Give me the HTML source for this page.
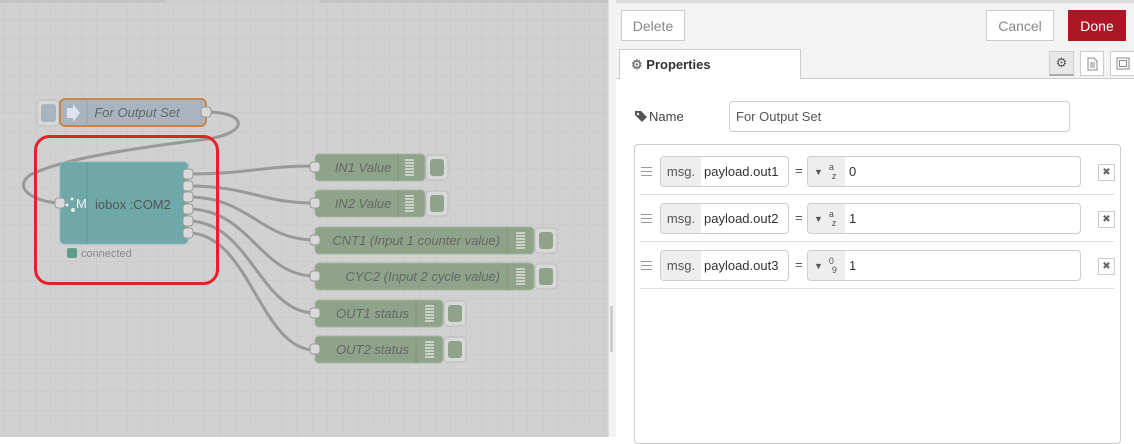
<!DOCTYPE html>
<html><head><meta charset="utf-8"><style>
*{box-sizing:border-box;margin:0;padding:0}
body{width:1134px;height:437px;overflow:hidden;position:relative;font-family:"Liberation Sans",Arial,sans-serif;background:#fff}
.a{position:absolute}
.btn{position:absolute;background:#fff;border:1px solid #ccc;color:#888;font-size:14px;display:flex;align-items:center;justify-content:center}
.inp{position:absolute;border:1px solid #ccc;border-radius:4px;background:#fff;font-size:13px;color:#555;display:flex;align-items:center}
.hd{position:absolute;width:11px;height:9px;border-top:1.5px solid #999;border-bottom:1.5px solid #999}
.hd div{margin-top:2.5px;height:1.5px;background:#999}
</style></head><body>
<svg class="a" style="left:0;top:0" width="608" height="437" font-family="Liberation Sans">
<defs><pattern id="g" x="4" y="1" width="15.4" height="18.6" patternUnits="userSpaceOnUse"><rect width="15.4" height="18.6" fill="#d1d1d1"/><path d="M0 0V18.6M0 0H15.4" stroke="#c6c6c6" stroke-width="1"/></pattern></defs>
<rect width="608" height="437" fill="url(#g)"/>
<rect x="0" y="0" width="165" height="3" fill="#c4c4c4"/><rect x="320" y="0" width="288" height="3" fill="#c4c4c4"/>
<g fill="none" stroke="#999" stroke-width="3">
<path d="M206 112 C250 112 250 135 200 140 C120 150 60 160 30 175 C10 190 40 203 60 203"/>
<path d="M188 174 C250 174 260 166 315 166"/>
<path d="M188 186 C250 186 260 203 315 203"/>
<path d="M188 197 C250 197 260 240 315 240"/>
<path d="M188 209 C250 209 260 276 315 276"/>
<path d="M188 221 C250 221 260 313 315 313"/>
<path d="M188 233 C250 233 260 350 315 350"/>
</g>
<rect x="37" y="100" width="22" height="26" rx="4" fill="#d8d8d8" stroke="#bbb"/>
<rect x="41" y="104" width="15" height="18" rx="3" fill="#a9b4be"/>
<rect x="60" y="99" width="146" height="27" rx="5" fill="#a8b4bf" stroke="#c8864a" stroke-width="2"/>
<path d="M87 99V126" stroke="#97a2ac"/>
<path d="M67 108h6v-4l7 9-7 9v-4h-6z" fill="#eef" opacity=".8"/>
<text x="137" y="117" font-size="13" font-style="italic" fill="#666" text-anchor="middle">For Output Set</text>
<rect x="201" y="107" width="10" height="10" rx="3" fill="#d9d9d9" stroke="#999"/>
<rect x="60" y="162" width="128" height="82" rx="4" fill="#6ea8a8" stroke="#8cbcbc"/>
<path d="M87 162V244" stroke="#5f9797"/>
<text x="76" y="208" font-size="13" fill="#f0f0f0">M</text>
<circle cx="72" cy="199" r="1.5" fill="#eee"/><circle cx="67" cy="205" r="1.5" fill="#eee"/><circle cx="73" cy="210" r="2" fill="#eee"/>
<text x="95" y="209" font-size="13" fill="#555">iobox :COM2</text>
<rect x="55" y="198" width="10" height="10" rx="3" fill="#d9d9d9" stroke="#999"/>
<g fill="#d9d9d9" stroke="#999"><rect x="183" y="169" width="10" height="10" rx="3"/><rect x="183" y="181" width="10" height="10" rx="3"/><rect x="183" y="192" width="10" height="10" rx="3"/><rect x="183" y="204" width="10" height="10" rx="3"/><rect x="183" y="216" width="10" height="10" rx="3"/><rect x="183" y="228" width="10" height="10" rx="3"/></g>
<rect x="67" y="248" width="10" height="10" rx="2" fill="#5f9f88"/>
<text x="81" y="257" font-size="11" fill="#888">connected</text>
<rect x="35.5" y="136.5" width="182" height="147" rx="14" fill="none" stroke="#e8202a" stroke-width="3"/>
<g font-size="13" font-style="italic" fill="#666">
<rect x="315" y="154" width="110" height="27" rx="4" fill="#8fa38a" stroke="#a7b5a3"/><path d="M398 154V181" stroke="#7f917a"/><rect x="426" y="155" width="22" height="25" rx="4" fill="#d8d8d8" stroke="#bbb"/><rect x="430" y="159" width="14" height="17" rx="3" fill="#8fa38a"/>
<text x="363" y="172" text-anchor="middle">IN1 Value</text>
<rect x="315" y="190" width="110" height="27" rx="4" fill="#8fa38a" stroke="#a7b5a3"/><path d="M398 190V217" stroke="#7f917a"/><rect x="426" y="191" width="22" height="25" rx="4" fill="#d8d8d8" stroke="#bbb"/><rect x="430" y="195" width="14" height="17" rx="3" fill="#8fa38a"/>
<text x="363" y="208" text-anchor="middle">IN2 Value</text>
<rect x="315" y="227" width="219" height="27" rx="4" fill="#8fa38a" stroke="#a7b5a3"/><path d="M507 227V254" stroke="#7f917a"/><rect x="535" y="228" width="22" height="25" rx="4" fill="#d8d8d8" stroke="#bbb"/><rect x="539" y="232" width="14" height="17" rx="3" fill="#8fa38a"/>
<text x="500" y="245" text-anchor="end">CNT1 (Input 1 counter value)</text>
<rect x="315" y="263" width="219" height="27" rx="4" fill="#8fa38a" stroke="#a7b5a3"/><path d="M507 263V290" stroke="#7f917a"/><rect x="535" y="264" width="22" height="25" rx="4" fill="#d8d8d8" stroke="#bbb"/><rect x="539" y="268" width="14" height="17" rx="3" fill="#8fa38a"/>
<text x="500" y="281" text-anchor="end">CYC2 (Input 2 cycle value)</text>
<rect x="315" y="300" width="128" height="27" rx="4" fill="#8fa38a" stroke="#a7b5a3"/><path d="M416 300V327" stroke="#7f917a"/><rect x="444" y="301" width="22" height="25" rx="4" fill="#d8d8d8" stroke="#bbb"/><rect x="448" y="305" width="14" height="17" rx="3" fill="#8fa38a"/>
<text x="409" y="318" text-anchor="end">OUT1 status</text>
<rect x="315" y="336" width="128" height="27" rx="4" fill="#8fa38a" stroke="#a7b5a3"/><path d="M416 336V363" stroke="#7f917a"/><rect x="444" y="337" width="22" height="25" rx="4" fill="#d8d8d8" stroke="#bbb"/><rect x="448" y="341" width="14" height="17" rx="3" fill="#8fa38a"/>
<text x="409" y="354" text-anchor="end">OUT2 status</text>
</g>
<g stroke="#eee" stroke-width="1.2">
<path d="M405 160h9M405 163h9M405 166h9M405 169h9M405 172h9M405 175h9"/>
<path d="M405 196h9M405 199h9M405 202h9M405 205h9M405 208h9M405 211h9"/>
<path d="M516 233h9M516 236h9M516 239h9M516 242h9M516 245h9M516 248h9"/>
<path d="M516 269h9M516 272h9M516 275h9M516 278h9M516 281h9M516 284h9"/>
<path d="M425 306h9M425 309h9M425 312h9M425 315h9M425 318h9M425 321h9"/>
<path d="M425 342h9M425 345h9M425 348h9M425 351h9M425 354h9M425 357h9"/>
</g>
<g fill="#d9d9d9" stroke="#999"><rect x="310" y="162" width="10" height="10" rx="3"/><rect x="310" y="198" width="10" height="10" rx="3"/><rect x="310" y="235" width="10" height="10" rx="3"/><rect x="310" y="271" width="10" height="10" rx="3"/><rect x="310" y="308" width="10" height="10" rx="3"/><rect x="310" y="344" width="10" height="10" rx="3"/></g>
</svg>
<div class="a" style="left:608px;top:0;width:8px;height:437px;background:#f3f3f3;border-left:1px solid #ddd"></div>
<div class="a" style="left:610px;top:306px;width:3px;height:46px;background:#ccc"></div>
<div class="a" style="left:616px;top:0;width:518px;height:437px;background:#fff"></div>
<div class="a" style="left:616px;top:0;width:518px;height:79px;background:#f3f3f3;border-top:3px solid #ddd"></div>
<div class="btn" style="left:621px;top:10px;width:64px;height:31px">Delete</div>
<div class="btn" style="left:986px;top:10px;width:68px;height:31px">Cancel</div>
<div class="btn" style="left:1068px;top:10px;width:58px;height:31px;background:#ad1625;border-color:#ad1625;color:#fff">Done</div>
<div class="a" style="left:616px;top:78px;width:518px;height:1px;background:#ccc"></div>
<div class="a" style="left:619px;top:49px;width:182px;height:30px;background:#fff;border:1px solid #ccc;border-bottom:none;font-size:13px;font-weight:bold;color:#333;padding:7px 0 0 11px"><span style="color:#777">⚙</span> Properties</div>
<div class="a" style="left:1049px;top:51px;width:25px;height:25px;background:#e8e8e8;border:1px solid #ccc;border-bottom:2px solid #aaa;font-size:13px;color:#555;text-align:center;line-height:22px">⚙</div>
<div class="a" style="left:1080px;top:51px;width:24px;height:25px;background:#fff;border:1px solid #ccc"><svg width="22" height="23"><path d="M7 6h6l3 3v9H7z" fill="none" stroke="#888"/><path d="M9 11h5M9 13h5M9 15h5" stroke="#888"/></svg></div>
<div class="a" style="left:1110px;top:51px;width:26px;height:25px;background:#fff;border:1px solid #ccc"><svg width="24" height="23"><rect x="6" y="6" width="12" height="11" fill="none" stroke="#888"/><rect x="8.5" y="8.5" width="7" height="6" fill="none" stroke="#888"/></svg></div>
<div class="a" style="left:649px;top:109px;font-size:13px;color:#444">Name</div>
<svg class="a" style="left:634px;top:110px" width="14" height="12"><path d="M1 1h6l6 6-5 5-7-7z" fill="#555"/><circle cx="4" cy="4" r="1.2" fill="#fff"/></svg>
<div class="inp" style="left:729px;top:101px;width:341px;height:31px;padding-left:6px">For Output Set</div>
<div class="a" style="left:634px;top:144px;width:487px;height:300px;border:1px solid #ccc;border-radius:4px"></div>
<div class="a" style="left:640px;top:194px;width:474px;height:1px;background:#ddd"></div>
<div class="a" style="left:640px;top:241px;width:474px;height:1px;background:#ddd"></div>
<div class="a" style="left:640px;top:288px;width:474px;height:1px;background:#ddd"></div>

<div class="hd" style="left:641px;top:167px"><div></div></div>
<div class="inp" style="left:660px;top:156px;width:129px;height:31px;overflow:hidden"><span style="background:#eee;height:100%;width:40px;display:flex;align-items:center;justify-content:center;color:#555">msg.</span><span style="padding-left:3px;color:#333">payload.out1</span></div>
<div class="a" style="left:795px;top:163px;font-size:13px;color:#555">=</div>
<div class="inp" style="left:807px;top:156px;width:274px;height:31px;overflow:hidden"><span style="background:#eee;height:100%;width:37px;display:flex;align-items:center;font-size:9px;color:#555;padding-left:6px">▼ <span style="font-size:9px;margin-left:6px;line-height:9px">a<br><span style="margin-left:3px">z</span></span></span><span style="padding-left:4px;color:#333">0</span></div>
<div class="a" style="left:1098px;top:164px;width:17px;height:17px;border:1px solid #ccc;font-size:10px;color:#666;text-align:center;line-height:15px">✖</div>

<div class="hd" style="left:641px;top:214px"><div></div></div>
<div class="inp" style="left:660px;top:203px;width:129px;height:31px;overflow:hidden"><span style="background:#eee;height:100%;width:40px;display:flex;align-items:center;justify-content:center;color:#555">msg.</span><span style="padding-left:3px;color:#333">payload.out2</span></div>
<div class="a" style="left:795px;top:210px;font-size:13px;color:#555">=</div>
<div class="inp" style="left:807px;top:203px;width:274px;height:31px;overflow:hidden"><span style="background:#eee;height:100%;width:37px;display:flex;align-items:center;font-size:9px;color:#555;padding-left:6px">▼ <span style="font-size:9px;margin-left:6px;line-height:9px">a<br><span style="margin-left:3px">z</span></span></span><span style="padding-left:4px;color:#333">1</span></div>
<div class="a" style="left:1098px;top:211px;width:17px;height:17px;border:1px solid #ccc;font-size:10px;color:#666;text-align:center;line-height:15px">✖</div>

<div class="hd" style="left:641px;top:261px"><div></div></div>
<div class="inp" style="left:660px;top:250px;width:129px;height:31px;overflow:hidden"><span style="background:#eee;height:100%;width:40px;display:flex;align-items:center;justify-content:center;color:#555">msg.</span><span style="padding-left:3px;color:#333">payload.out3</span></div>
<div class="a" style="left:795px;top:257px;font-size:13px;color:#555">=</div>
<div class="inp" style="left:807px;top:250px;width:274px;height:31px;overflow:hidden"><span style="background:#eee;height:100%;width:37px;display:flex;align-items:center;font-size:9px;color:#555;padding-left:6px">▼ <span style="font-size:9px;margin-left:6px;line-height:9px">0<br><span style="margin-left:3px">9</span></span></span><span style="padding-left:4px;color:#333">1</span></div>
<div class="a" style="left:1098px;top:258px;width:17px;height:17px;border:1px solid #ccc;font-size:10px;color:#666;text-align:center;line-height:15px">✖</div>
</body></html>
